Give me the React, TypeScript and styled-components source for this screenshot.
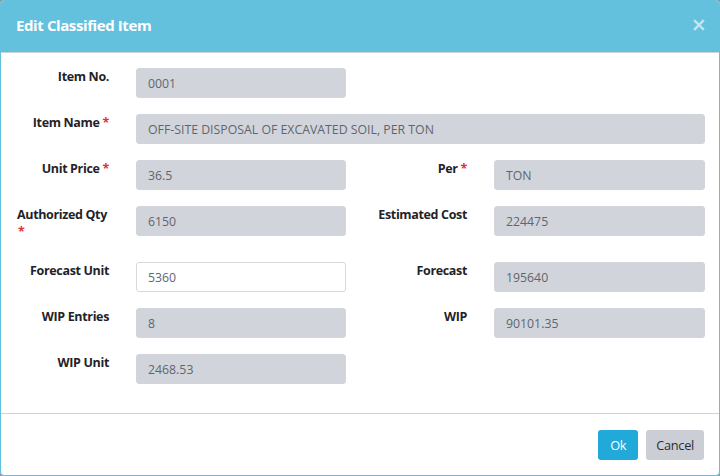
import styled, { createGlobalStyle } from 'styled-components';

const GlobalStyle = createGlobalStyle`
  html, body {
    margin: 0;
    padding: 0;
    background: #8d9ba3;
  }
  * {
    box-sizing: border-box;
  }
`;

const StyledModal = styled.div`
  width: 720px;
  height: 476px;
  display: flex;
  flex-direction: column;
  background: #ffffff;
  border: 1px solid #63c1de;
  border-radius: 4px;
  overflow: hidden;
  font-family: "Open Sans", "Noto Sans", sans-serif;
`;

const StyledHeader = styled.div`
  height: 52px;
  flex-shrink: 0;
  display: flex;
  align-items: center;
  justify-content: space-between;
  padding: 0 15px;
  background: #63c1de;
  border-bottom: 1px solid #c9d3da;
`;

const StyledTitle = styled.div`
  color: #ffffff;
  font-size: 15px;
  font-weight: 700;
  letter-spacing: -0.4px;
  margin-top: -3px;
`;

const StyledClose = styled.button`
  border: none;
  background: none;
  padding: 0;
  width: 14px;
  height: 14px;
  display: flex;
  align-items: center;
  justify-content: center;
  cursor: pointer;
  margin-top: -4px;
  margin-right: -2px;
`;

const StyledBody = styled.div`
  flex: 1;
  display: grid;
  grid-template-columns: 92px 210px 94px 211px;
  column-gap: 27px;
  row-gap: 16px;
  align-content: start;
  padding: 15px 16px 0 16px;
  border-bottom: 1px solid #cfd4d9;
`;

const StyledLabel = styled.label<{ $wrap?: boolean }>`
  color: #1f2328;
  font-size: 12.5px;
  font-weight: 700;
  letter-spacing: -0.35px;
  line-height: 17px;
  text-align: ${(p) => (p.$wrap ? 'left' : 'right')};
  margin-bottom: 6px;
`;

const StyledRequired = styled.span<{ $wrap?: boolean }>`
  color: #e0323a;
  display: ${(p) => (p.$wrap ? 'block' : 'inline')};
  margin-left: ${(p) => (p.$wrap ? '1px' : '3px')};
`;

const StyledInput = styled.input<{ $wide?: boolean }>`
  height: 30px;
  width: 100%;
  grid-column: ${(p) => (p.$wide ? 'span 3' : 'auto')};
  border: 1px solid ${(p) => (p.readOnly ? '#d1d5db' : '#d6dadf')};
  border-radius: 3px;
  background: ${(p) => (p.readOnly ? '#d1d5db' : '#ffffff')};
  color: #5f6570;
  font-family: "Open Sans", "Noto Sans", sans-serif;
  font-size: 12.3px;
  padding: 0 11px;
  outline: none;
`;

const StyledFooter = styled.div`
  height: 61px;
  flex-shrink: 0;
  display: flex;
  align-items: center;
  justify-content: flex-end;
  gap: 8px;
  padding: 0 15px 0 0;
`;

const StyledButton = styled.button<{ $primary?: boolean }>`
  height: 30px;
  border: none;
  border-radius: 3px;
  padding: 0 ${(p) => (p.$primary ? '12px' : '10px')};
  font-family: "Open Sans", "Noto Sans", sans-serif;
  font-size: 12.8px;
  letter-spacing: -0.3px;
  color: ${(p) => (p.$primary ? '#ffffff' : '#2a2e33')};
  background: ${(p) => (p.$primary ? '#21a9d9' : '#cbcfd5')};
  cursor: pointer;
`;

const Spacer = styled.div``;

type Field = {
  label: string;
  value: string;
  required?: boolean;
  readOnly?: boolean;
  wide?: boolean;
  wrap?: boolean;
};

const rows: (Field | null)[][] = [
  [{ label: 'Item No.', value: '0001', readOnly: true }, null],
  [
    {
      label: 'Item Name',
      value: 'OFF-SITE DISPOSAL OF EXCAVATED SOIL, PER TON',
      required: true,
      readOnly: true,
      wide: true,
    },
  ],
  [
    { label: 'Unit Price', value: '36.5', required: true, readOnly: true },
    { label: 'Per', value: 'TON', required: true, readOnly: true },
  ],
  [
    { label: 'Authorized Qty', value: '6150', required: true, readOnly: true, wrap: true },
    { label: 'Estimated Cost', value: '224475', readOnly: true },
  ],
  [
    { label: 'Forecast Unit', value: '5360' },
    { label: 'Forecast', value: '195640', readOnly: true },
  ],
  [
    { label: 'WIP Entries', value: '8', readOnly: true },
    { label: 'WIP', value: '90101.35', readOnly: true },
  ],
  [{ label: 'WIP Unit', value: '2468.53', readOnly: true }, null],
];

function CloseIcon() {
  return (
    <svg width="12" height="12" viewBox="0 0 12 12">
      <path d="M2 2 L10 10 M10 2 L2 10" stroke="#c4e6f2" strokeWidth="2.4" strokeLinecap="square" />
    </svg>
  );
}

export default function App() {
  return (
    <>
      <GlobalStyle />
      <StyledModal>
        <StyledHeader>
          <StyledTitle>Edit Classified Item</StyledTitle>
          <StyledClose aria-label="Close">
            <CloseIcon />
          </StyledClose>
        </StyledHeader>
        <StyledBody>
          {rows.flatMap((row, i) =>
            row.map((field, j) =>
              field ? (
                [
                  <StyledLabel key={`l${i}-${j}`} $wrap={field.wrap}>
                    {field.label}
                    {field.required && <StyledRequired $wrap={field.wrap}>*</StyledRequired>}
                  </StyledLabel>,
                  <StyledInput
                    key={`i${i}-${j}`}
                    defaultValue={field.value}
                    readOnly={field.readOnly}
                    $wide={field.wide}
                  />,
                ]
              ) : (
                [<Spacer key={`s${i}-${j}a`} />, <Spacer key={`s${i}-${j}b`} />]
              )
            )
          )}
        </StyledBody>
        <StyledFooter>
          <StyledButton $primary>Ok</StyledButton>
          <StyledButton>Cancel</StyledButton>
        </StyledFooter>
      </StyledModal>
    </>
  );
}
